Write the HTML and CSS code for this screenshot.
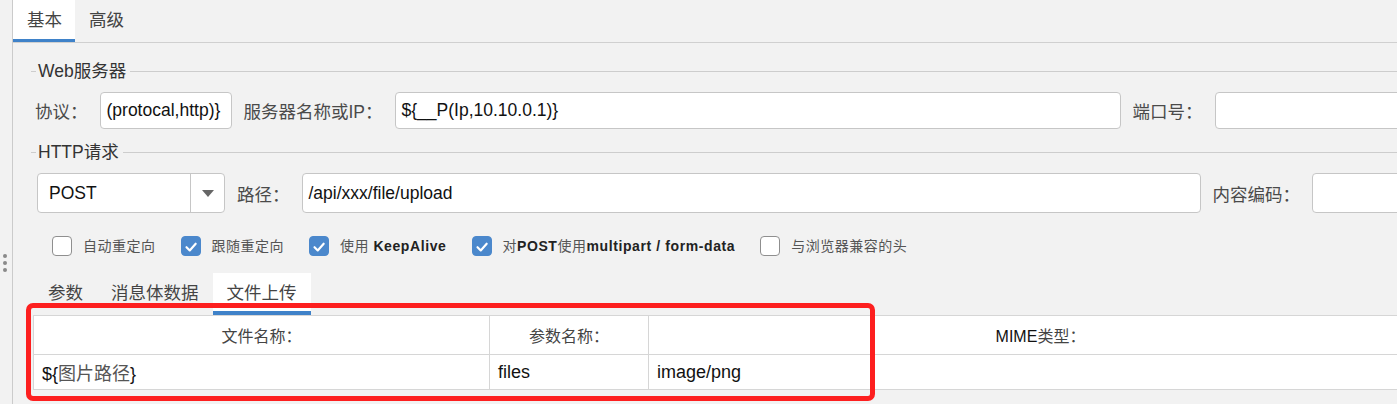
FILE: index.html
```html
<!DOCTYPE html>
<html lang="zh-CN">
<head>
<meta charset="utf-8">
<title>HTTP请求</title>
<link rel="stylesheet" href="styles.css">
</head>
<body>
<div class="app">
  <div class="handle"><span class="dot"></span><span class="dot"></span><span class="dot"></span></div>
  <div class="main">
    <div class="tabbar">
      <div class="tab active">基本</div>
      <div class="tab">高级</div>
    </div>
    <div class="panel">
      <div class="legend"><span class="legend-text">Web服务器</span></div>
      <div class="row row1">
        <span class="lbl">协议：</span>
        <div class="input w-proto">(protocal,http)}</div>
        <span class="lbl">服务器名称或IP：</span>
        <div class="input w-server">${__P(Ip,10.10.0.1)}</div>
        <span class="lbl">端口号：</span>
        <div class="input w-port"></div>
      </div>
      <div class="legend legend2"><span class="legend-text">HTTP请求</span></div>
      <div class="row row2">
        <div class="select">
          <span class="select-val">POST</span>
          <span class="select-btn"><svg width="12" height="7" viewBox="0 0 12 7"><path d="M0 0 L12 0 L6 7 Z" fill="#666"/></svg></span>
        </div>
        <span class="lbl">路径：</span>
        <div class="input tall w-path">/api/xxx/file/upload</div>
        <span class="lbl">内容编码：</span>
        <div class="input tall w-enc"></div>
      </div>
      <div class="checks">
        <div class="check"><span class="box"></span><span class="ctext">自动重定向</span></div>
        <div class="check"><span class="box on"><svg width="20" height="20" viewBox="0 0 20 20"><path d="M5 10.2 L8.6 13.8 L15.2 6.4" fill="none" stroke="#fff" stroke-width="2.4" stroke-linecap="round" stroke-linejoin="round"/></svg></span><span class="ctext">跟随重定向</span></div>
        <div class="check"><span class="box on"><svg width="20" height="20" viewBox="0 0 20 20"><path d="M5 10.2 L8.6 13.8 L15.2 6.4" fill="none" stroke="#fff" stroke-width="2.4" stroke-linecap="round" stroke-linejoin="round"/></svg></span><span class="ctext">使用 <b>KeepAlive</b></span></div>
        <div class="check"><span class="box on"><svg width="20" height="20" viewBox="0 0 20 20"><path d="M5 10.2 L8.6 13.8 L15.2 6.4" fill="none" stroke="#fff" stroke-width="2.4" stroke-linecap="round" stroke-linejoin="round"/></svg></span><span class="ctext">对<b>POST</b>使用<b>multipart / form-data</b></span></div>
        <div class="check"><span class="box"></span><span class="ctext">与浏览器兼容的头</span></div>
      </div>
      <div class="files">
        <div class="subtabs">
          <div class="subtab">参数</div>
          <div class="subtab">消息体数据</div>
          <div class="subtab active">文件上传</div>
        </div>
        <table class="grid">
          <colgroup><col class="c1"><col class="c2"><col class="c3"></colgroup>
          <thead>
            <tr><th>文件名称：</th><th>参数名称：</th><th><span class="dark">MIME</span>类型：</th></tr>
          </thead>
          <tbody>
            <tr><td><span class="dark">${</span>图片路径<span class="dark">}</span></td><td>files</td><td>image/png</td></tr>
          </tbody>
        </table>
        <div class="highlight"></div>
      </div>
    </div>
  </div>
</div>
</body>
</html>
```
FILE: styles.css
```css
* { box-sizing: border-box; }
html, body { margin: 0; padding: 0; }
body {
  width: 1397px;
  height: 404px;
  overflow: hidden;
  background: #f2f2f2;
  font-family: "Liberation Sans", "Noto Sans CJK SC", sans-serif;
  color: #222;
}
.app { display: flex; height: 404px; }
.handle {
  width: 12px;
  flex: none;
  display: flex;
  flex-direction: column;
  align-items: center;
  padding-top: 254px;
  gap: 3px;
  padding-right: 2px;
}
.dot { width: 4px; height: 4px; border-radius: 50%; background: #8a8a8a; }
.main {
  flex: 1;
  min-width: 0;
  border-left: 1px solid #cbcbcb;
  overflow: hidden;
}
.tabbar {
  display: flex;
  height: 43px;
  border-bottom: 1px solid #d0d0d0;
}
.tab {
  height: 42px;
  padding: 0 13px 0 14px;
  font-size: 17.5px;
  line-height: 40px;
  color: #444;
}
.tab.active {
  background: #fff;
  border-bottom: 3px solid #3f82c9;
}
.panel { padding-left: 18px; }
.legend {
  display: flex;
  align-items: center;
  height: 20px;
  margin-top: 18px;
  font-size: 17.5px;
  color: #333;
}
.legend::before {
  content: "";
  width: 5px;
  border-top: 1px solid #cdcdcd;
  margin-right: 2px;
}
.legend::after {
  content: "";
  flex: 1;
  border-top: 1px solid #cdcdcd;
  margin-left: 4px;
}
.legend-text { line-height: 20px; white-space: nowrap; }
.legend2 { margin-top: 13px; }
.row {
  display: flex;
  align-items: center;
  flex-wrap: nowrap;
  white-space: nowrap;
}
.row1 { margin-top: 11px; padding-left: 4px; }
.row2 { margin-top: 11px; padding-left: 6px; }
.lbl {
  flex: none;
  font-size: 17.5px;
  color: #4a4a4a;
  margin: 0 12px;
}
.row > .lbl:first-child { margin-left: 0; }
.input {
  flex: none;
  height: 37px;
  background: #fff;
  border: 1px solid #c6c6c6;
  border-radius: 4px;
  padding: 0 6px;
  font-size: 17.5px;
  line-height: 35px;
  color: #111;
  overflow: hidden;
}
.input.tall { height: 40px; line-height: 38px; }
.w-proto { width: 132px; }
.w-server { width: 726px; }
.w-port { width: 200px; }
.w-path { width: 899px; }
.w-enc { width: 200px; }
.select {
  flex: none;
  display: flex;
  width: 188px;
  height: 40px;
  background: #fff;
  border: 1px solid #c6c6c6;
  border-radius: 4px;
}
.select-val {
  flex: 1;
  padding-left: 11px;
  font-size: 17.5px;
  line-height: 38px;
  color: #111;
}
.select-btn {
  width: 34px;
  border-left: 1px solid #c6c6c6;
  display: flex;
  align-items: center;
  justify-content: center;
}
.checks {
  display: flex;
  align-items: center;
  margin-top: 23px;
  padding-left: 21px;
  gap: 25px;
  height: 20px;
}
.check { display: flex; align-items: center; gap: 11px; white-space: nowrap; }
.box {
  width: 20px;
  height: 20px;
  border: 1px solid #8f8f8f;
  border-radius: 4px;
  background: #fff;
  display: flex;
}
.box.on { background: #4b88cc; border-color: #4b88cc; }
.ctext {
  font-size: 14px;
  letter-spacing: 0.5px;
  color: #555;
  line-height: 20px;
}
.ctext b { color: #222; font-weight: bold; letter-spacing: 0.6px; }
.files {
  position: relative;
  margin-top: 17px;
  margin-left: 2px;
}
.subtabs { display: flex; padding-left: 1px; height: 42px; }
.subtab {
  padding: 0 14px;
  height: 42px;
  font-size: 17.5px;
  line-height: 40px;
  color: #444;
}
.subtab.active {
  background: #fff;
  border-bottom: 4px solid #3f82c9;
}
.grid {
  border-collapse: collapse;
  width: 1400px;
  table-layout: fixed;
  background: #fff;
}
.c1 { width: 456px; }
.c2 { width: 159px; }
.grid th, .grid td {
  border: 1px solid #d6d6d6;
  padding: 0 0 0 8px;
  white-space: nowrap;
  overflow: hidden;
}
.grid th {
  height: 39px;
  font-size: 16px;
  font-weight: normal;
  color: #444;
  text-align: center;
  padding: 0;
}
.grid td {
  height: 35px;
  font-size: 18px;
  color: #111;
}
.grid td:first-child { color: #555; }
.dark { color: #111; }
.highlight {
  position: absolute;
  left: -7px;
  top: 30px;
  width: 849px;
  height: 98px;
  border: 5px solid #fd1f1f;
  border-radius: 7px;
  pointer-events: none;
}
```
